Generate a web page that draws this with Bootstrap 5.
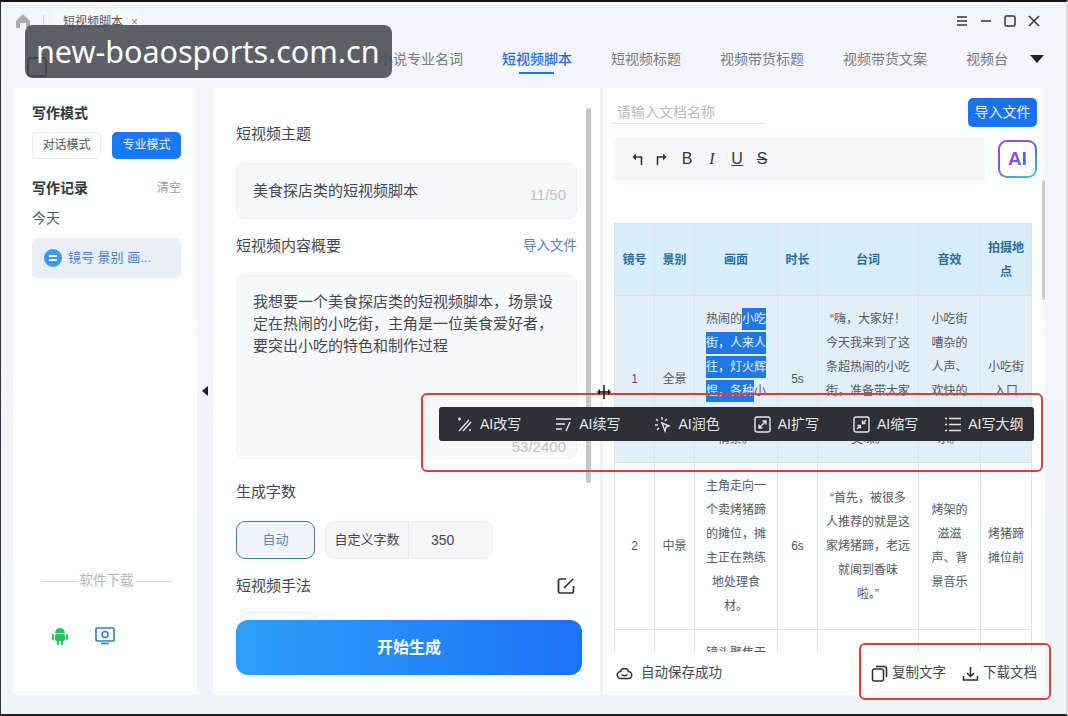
<!DOCTYPE html>
<html lang="zh-CN">
<head>
  <meta charset="UTF-8" />
  <title>短视频脚本</title>
  <link href="https://cdn.jsdelivr.net/npm/bootstrap@5.3.3/dist/css/bootstrap.min.css" rel="stylesheet">
  <style>
    html, body { margin: 0; height: 716px; overflow: hidden; background: #f0f4fb; }
    body { font-family: "Liberation Sans", "Noto Sans CJK SC", sans-serif; color: #3a3d44; }
    .app-win { position: relative; width: 1068px; height: 716px; overflow: hidden; background: linear-gradient(180deg, #f4f5fa 0, #eff5fb 100%); border-top: 2px solid #111; border-bottom: 2px solid #222; border-left: 1px solid #333; border-right: 2px solid #d8dbe0; }
    .gap-t16 { margin-top: 16px; }
    .gap-t18 { margin-top: 18px; }
    .gap-t22 { margin-top: 22px; }

    .title-bar { height: 38px; padding: 0 26px 0 14px; }
    .home-ico { width: 16px; height: 16px; fill: #a9adb5; }
    .sep-v { width: 1px; height: 13px; background: #c8ccd3; margin: 0 11px 0 12px; }
    .win-tab { width: 86px; height: 31px; margin-top: 7px; padding: 0 0 5px 8px; background: #f8f9fc; font-size: 12px; color: #555; white-space: nowrap; }
    .win-tab span { margin-left: 8px; color: #888; }
    .win-btns { gap: 12px; }
    .win-btns svg { width: 12px; height: 12px; stroke: #33363c; fill: none; stroke-width: 1.5; }

    .tab-row { height: 38px; padding-left: 26px; font-size: 14px; color: #777b83; }
    .tab-ico { width: 20px; height: 20px; margin-top: 15px; border: 2px solid #333; border-radius: 4px; margin-right: 332px; }
    .tab-it { position: relative; margin-right: 39px; white-space: nowrap; }
    .tab-it.on { color: #2a6fd6; font-weight: 500; }
    .tab-it.on::after { content: ""; position: absolute; left: 17px; right: 18px; bottom: -4px; height: 2px; background: #1f74e8; }
    .tab-more { width: 0; height: 0; border-left: 7px solid transparent; border-right: 7px solid transparent; border-top: 8px solid #222; margin-left: -17px; }

    .main-row { height: 607px; margin-top: 10px; padding-left: 12px; }
    .side-box { width: 184px; background: #fdfeff; padding: 14px 16px 50px 19px; }
    .side-h { font-size: 14px; font-weight: 700; line-height: 22px; color: #33363c; }
    .mode-btn { width: 69px; height: 27px; border-radius: 5px; font-size: 12px; line-height: 27px; text-align: center; }
    .mode-off { border: 1px solid #eceef2; color: #555; line-height: 25px; }
    .mode-on { background: #1a78f2; color: #e8f2ff; }
    .clear-lnk { font-size: 12px; color: #9a9da3; }
    .today-t { font-size: 14px; line-height: 22px; margin-top: 8px; color: #555; }
    .hist-it { height: 40px; margin-top: 9px; background: #e9eff9; border-radius: 6px; padding-left: 12px; font-size: 13px; color: #4d80c8; gap: 6px; white-space: nowrap; }
    .hist-dot { width: 18px; height: 18px; }
    .dl-line { font-size: 13.5px; color: #b0b3b8; margin: 0 10px 36px 10px; gap: 2px; height: 20px; }
    .dl-line i { flex: 1; height: 1px; background: #d8dade; }
    .dl-ico { gap: 26px; padding-left: 19px; height: 18px; }

    .arrow-col { width: 16px; padding-bottom: 2px; }
    .arrow-l { width: 0; height: 0; border-top: 5px solid transparent; border-bottom: 5px solid transparent; border-right: 6px solid #222; }

    .mid-box { position: relative; width: 387px; background: #fdfeff; padding: 0 18px 20px 23px; }
    .mid-scroll { flex: 1; overflow: hidden; padding-top: 35px; min-height: 0; }
    .f-lab { font-size: 15px; line-height: 22px; color: #44474d; }
    .f-lnk { font-size: 13.5px; color: #5f83b0; padding-right: 5px; }
    .f-input { width: 341px; height: 56px; margin-top: 18px; padding: 0 10px 0 16px; background: #f7f8fc; border: 1px solid #eff0f4; border-radius: 8px; font-size: 15px; color: #44474d; }
    .f-count { font-size: 15px; color: #c0c2c7; margin-top: 8px; }
    .f-area { width: 341px; height: 184px; margin-top: 18px; padding: 15px 10px 0 16px; background: #f8f9fc; border: 1px solid #eff0f4; border-radius: 8px; font-size: 15px; line-height: 22px; color: #44474d; }
    .cnt-btn { height: 38px; font-size: 13px; }
    .cnt-auto { width: 79px; border: 1px solid #3e7ea8; border-radius: 9px; background: #eff4fa; color: #5f88b8; }
    .cnt-group { width: 168px; margin-left: 10px; border: 1px solid #f0f1f4; border-radius: 9px; background: #f7f7fa; }
    .cnt-group b { width: 83px; font-weight: 400; border-right: 1px solid #e8e9ed; color: #44474d; }
    .cnt-group span { padding-left: 22px; font-size: 14px; color: #44474d; }
    .edit-ico { margin-right: 7px; }
    .peek-box { width: 76px; height: 20px; margin: 15px 0 0 4px; border: 1px solid #e9eaee; border-radius: 8px; }
    .go-btn { width: 346px; height: 55px; flex-shrink: 0; border: 0; border-radius: 12px; background: linear-gradient(90deg, #2f9ffa, #1a72f5); color: #fff; font-family: "Liberation Serif", "Noto Sans CJK SC", serif; font-size: 16px; font-weight: 700; }
    .bar-mid { position: absolute; left: 373px; top: 20px; width: 5px; height: 375px; background: #c4c6ca; border-radius: 3px; }

    .split-v { width: 3px; background: #eef1f6; }
    .right-box { position: relative; width: 442px; background: #fdfeff; }
    .r-top { padding: 10px 8px 0 9px; height: 50px; }
    .doc-name { width: 153px; height: 25px; margin-top: 1px; border-bottom: 1px solid #e7e8eb; font-size: 14px; color: #b8bbc1; padding-left: 5px; line-height: 26px; }
    .imp-btn { width: 69px; height: 29px; border-radius: 5px; background: #1a73ee; color: #f0f6ff; font-size: 14px; line-height: 29px; text-align: center; }
    .ed-row { height: 42px; padding: 0 8px 0 11px; }
    .ed-tools { width: 371px; height: 42px; background: #f6f6fb; padding-left: 17px; gap: 13px; font-size: 16px; color: #33363c; }
    .ed-tools svg { width: 12px; height: 14px; fill: none; stroke: #33363c; stroke-width: 1.6; }
    .ed-tools span { width: 12px; text-align: center; }
    .ed-i { font-family: "Liberation Serif", serif; font-style: italic; }
    .ai-btn { position: relative; width: 39px; height: 38px; padding: 2px; border-radius: 9px; background: linear-gradient(150deg, #b23fd0, #5a6ae8 50%, #2fe0b0); }
    .ai-btn div { height: 100%; border-radius: 7px; background: #fff; font-size: 19px; font-weight: 700; line-height: 34px; text-align: center; }
    .ai-btn span { background: linear-gradient(90deg, #a83fd8, #3f6fe8); -webkit-background-clip: text; background-clip: text; color: transparent; }

    .tb-wrap { flex: 1; min-height: 0; overflow: hidden; padding: 43px 0 0 11px; }
    .sb-tbl { width: 417px; table-layout: fixed; font-size: 12px; line-height: 24px; margin: 0; border-color: #d8e4ea; --bs-table-bg: transparent; color: #55585d; }
    .sb-tbl th, .sb-tbl td { padding: 11px 2px; text-align: center; vertical-align: middle; }
    .sb-tbl thead th { height: 72px; background: #d9eefc; color: #2c6c98; font-weight: 700; padding: 0 2px; }
    .sb-tbl .row-sel td { background: #e2eff9; }
    .sel-t { padding: 4px 0; background: #1f78e4; color: #eaf4ff; }
    .w1, .w2, .w4 { width: 40px; }
    .w3 { width: 83px; }
    .w5 { width: 101px; }
    .w6 { width: 62px; }
    .w7 { width: 51px; }

    .r-foot { height: 43px; flex-shrink: 0; background: #fdfeff; padding: 0 8px 0 13px; font-size: 13.5px; color: #44474d; }
    .r-foot svg { width: 17px; height: 17px; fill: none; stroke: #2c2f34; stroke-width: 1.5; }
    .bar-right { position: absolute; left: 439px; top: 92px; width: 3px; height: 120px; background: #c9cbcf; border-radius: 2px; }

    .ai-bar { position: absolute; left: 438px; top: 405px; width: 595px; height: 34px; padding-left: 17px; gap: 34px; background: #2e3038; border-radius: 3px; color: #e6e7ea; font-size: 14px; white-space: nowrap; }
    .ai-bar div { gap: 7px; }
    .ai-bar svg { width: 17px; height: 17px; fill: none; stroke: #e6e7ea; stroke-width: 1.4; }
    .ai-bar .ai-last { margin-left: -8px; }
    .red-a, .red-b { position: absolute; border: 2px solid #d8403a; border-radius: 6px; pointer-events: none; }
    .red-a { left: 420px; top: 391px; width: 622px; height: 79px; }
    .red-b { left: 858px; top: 641px; width: 192px; height: 57px; }
    .curs-mark { position: absolute; left: 596px; top: 383px; width: 14px; height: 14px; }
    .wm-tag { position: absolute; left: 24px; top: 23px; width: 367px; height: 53px; background: rgba(72, 74, 82, .88); border-radius: 8px; color: #fff; font-family: "Noto Sans", sans-serif; font-size: 30.500px; line-height: 53px; padding-left: 11px; white-space: nowrap; }
  </style>
</head>
<body>
  <div class="app-win">

    <div class="title-bar d-flex align-items-center">
      <svg class="home-ico" viewBox="0 0 16 16"><path d="M8 1 1 8v7h4v-5h6v5h4V8z"/></svg>
      <div class="sep-v"></div>
      <div class="win-tab d-flex align-items-center align-self-start">短视频脚本<span>×</span></div>
      <div class="win-btns d-flex align-items-center ms-auto">
        <svg viewBox="0 0 12 12"><path d="M1 2h10M1 6h10M1 10h10"/></svg>
        <svg viewBox="0 0 12 12"><path d="M1 6h10"/></svg>
        <svg viewBox="0 0 12 12"><rect x="1" y="1" width="10" height="10" rx="1.5"/></svg>
        <svg viewBox="0 0 12 12"><path d="m1 1 10 10M11 1 1 11"/></svg>
      </div>
    </div>

    <div class="tab-row d-flex align-items-center">
      <div class="tab-ico"></div>
      <div class="tab-it">小说专业名词</div>
      <div class="tab-it on">短视频脚本</div>
      <div class="tab-it">短视频标题</div>
      <div class="tab-it">视频带货标题</div>
      <div class="tab-it">视频带货文案</div>
      <div class="tab-it">视频台</div>
      <div class="tab-more"></div>
    </div>

    <div class="main-row d-flex">
      <aside class="side-box d-flex flex-column">
        <div class="side-h mb-2">写作模式</div>
        <div class="d-flex justify-content-between">
          <div class="mode-btn mode-off">对话模式</div>
          <div class="mode-btn mode-on">专业模式</div>
        </div>
        <div class="d-flex justify-content-between align-items-center gap-t18">
          <div class="side-h">写作记录</div>
          <div class="clear-lnk">清空</div>
        </div>
        <div class="today-t">今天</div>
        <div class="hist-it d-flex align-items-center">
          <svg class="hist-dot" viewBox="0 0 18 18"><circle cx="9" cy="9" r="9" fill="#3d97f0"/><path d="M5 7h8M5 11h8" stroke="#fff" stroke-width="1.8"/></svg>
          镜号 景别 画...
        </div>
        <div class="dl-line d-flex align-items-center mt-auto"><i></i>软件下载<i></i></div>
        <div class="dl-ico d-flex align-items-center">
          <svg width="18" height="18" viewBox="0 0 18 18" fill="#2fc05a"><path d="M4 6a5 5 0 0 1 10 0z"/><rect x="4" y="7" width="10" height="7" rx="1"/><rect x="1" y="7" width="2" height="6" rx="1"/><rect x="15" y="7" width="2" height="6" rx="1"/><rect x="6" y="13" width="2" height="5" rx="1"/><rect x="10" y="13" width="2" height="5" rx="1"/></svg>
          <svg width="20" height="18" viewBox="0 0 20 18" fill="none"><rect x="1" y="1" width="18" height="13" rx="1" stroke="#2a7fc4" stroke-width="1.6"/><path d="M6 16.500h8" stroke="#2a7fc4" stroke-width="1.6"/><circle cx="10" cy="7.500" r="3" stroke="#2a7fc4" stroke-width="1.5"/></svg>
        </div>
      </aside>

      <div class="arrow-col d-flex align-items-center justify-content-center"><div class="arrow-l"></div></div>

      <section class="mid-box d-flex flex-column">
        <div class="mid-scroll">
          <div class="f-lab">短视频主题</div>
          <div class="f-input d-flex align-items-center justify-content-between">美食探店类的短视频脚本<span class="f-count">11/50</span></div>
          <div class="d-flex justify-content-between align-items-center gap-t16">
            <div class="f-lab">短视频内容概要</div>
            <div class="f-lnk">导入文件</div>
          </div>
          <div class="f-area d-flex flex-column">
            <div>我想要一个美食探店类的短视频脚本&#65292;场景设定在热闹的小吃街&#65292;主角是一位美食爱好者&#65292;要突出小吃的特色和制作过程</div>
            <div class="f-count mt-auto text-end">53/2400</div>
          </div>
          <div class="f-lab gap-t22">生成字数</div>
          <div class="d-flex gap-t18">
            <div class="cnt-btn cnt-auto d-flex align-items-center justify-content-center">自动</div>
            <div class="cnt-btn cnt-group d-flex align-items-center"><b class="h-100 d-flex align-items-center justify-content-center">自定义字数</b><span>350</span></div>
          </div>
          <div class="d-flex justify-content-between align-items-center gap-t16">
            <div class="f-lab">短视频手法</div>
            <svg class="edit-ico" width="18" height="18" viewBox="0 0 18 18" fill="none" stroke="#2c2f34" stroke-width="1.700"><path d="M9 2H3a1.500 1.500 0 0 0-1.500 1.500v11A1.500 1.500 0 0 0 3 16h12a1.500 1.500 0 0 0 1.500-1.500V9"/><path d="m7 11 9-9"/></svg>
          </div>
          <div class="peek-box"></div>
        </div>
        <button class="go-btn" type="button">开始生成</button>
        <div class="bar-mid"></div>
      </section>

      <div class="split-v"></div>

      <section class="right-box d-flex flex-column">
        <div class="r-top d-flex justify-content-between">
          <div class="doc-name">请输入文档名称</div>
          <div class="imp-btn">导入文件</div>
        </div>
        <div class="ed-row d-flex justify-content-between align-items-center">
          <div class="ed-tools d-flex align-items-center">
            <svg viewBox="0 0 12 14"><path d="M10.500 13V5H2"/><path d="M5 1.500 1.500 5 5 8.500" fill="#33363c" stroke="none"/></svg>
            <svg viewBox="0 0 12 14"><path d="M1.500 13V5H10"/><path d="M7 1.500 10.500 5 7 8.500" fill="#33363c" stroke="none"/></svg>
            <span>B</span>
            <span class="ed-i">I</span>
            <span class="text-decoration-underline">U</span>
            <span class="text-decoration-line-through">S</span>
          </div>
          <div class="ai-btn"><div><span>AI</span></div></div>
        </div>
        <div class="tb-wrap">
          <table class="table table-bordered sb-tbl">
            <thead>
              <tr>
                <th class="w1">镜号</th><th class="w2">景别</th><th class="w3">画面</th><th class="w4">时长</th><th class="w5">台词</th><th class="w6">音效</th><th class="w7">拍摄地点</th>
              </tr>
            </thead>
            <tbody>
              <tr class="row-sel">
                <td>1</td><td>全景</td>
                <td>热闹的<span class="sel-t">小吃<br>街&#65292;人来人<br>往&#65292;灯火辉<br>煌&#65292;各种</span>小<br>吃摊前人<br>情景。</td>
                <td>5s</td>
                <td>“嗨&#65292;大家好&#65281;<br>今天我来到了这<br>条超热闹的小吃<br>街&#65292;准备带大家<br>尝尝这里的<br>美味。”</td>
                <td>小吃街<br>嘈杂的<br>人声、<br>欢快的<br>背景音<br>乐。</td>
                <td>小吃街<br>入口</td>
              </tr>
              <tr>
                <td>2</td><td>中景</td>
                <td>主角走向一<br>个卖烤猪蹄<br>的摊位&#65292;摊<br>主正在熟练<br>地处理食<br>材。</td>
                <td>6s</td>
                <td>“首先&#65292;被很多<br>人推荐的就是这<br>家烤猪蹄&#65292;老远<br>就闻到香味<br>啦。”</td>
                <td>烤架的<br>滋滋<br>声、背<br>景音乐</td>
                <td>烤猪蹄<br>摊位前</td>
              </tr>
              <tr>
                <td></td><td></td><td>镜头聚焦于</td><td></td><td></td><td></td><td></td>
              </tr>
            </tbody>
          </table>
        </div>
        <div class="r-foot d-flex align-items-center">
          <svg viewBox="0 0 17 17"><path d="M5 13.500a3.500 3.500 0 0 1-.5-7 4.200 4.200 0 0 1 8 0 3.500 3.500 0 0 1-.5 7z"/><path d="M5.500 9.500c1.500 1.500 4.500 1.500 6 0"/></svg>
          <span class="ms-2">自动保存成功</span>
          <div class="ms-auto d-flex align-items-center">
            <svg viewBox="0 0 17 17"><rect x="1.500" y="4" width="11" height="12" rx="2"/><path d="M5 1.500h8.500a2 2 0 0 1 2 2V12"/></svg>
            <span class="ms-1">复制文字</span>
            <svg viewBox="0 0 17 17" class="ms-3"><path d="M8.500 2v9M5 8l3.500 3.500L12 8M1.500 11v4h14v-4"/></svg>
            <span class="ms-1">下载文档</span>
          </div>
        </div>
        <div class="bar-right"></div>
      </section>
    </div>

    <div class="ai-bar d-flex align-items-center">
      <div class="d-flex align-items-center"><svg viewBox="0 0 17 17"><path d="M3 15 13 4M7 15 15 6M2 3h3M3.500 1.500v3M13 14h2"/></svg>AI改写</div>
      <div class="d-flex align-items-center"><svg viewBox="0 0 17 17"><path d="M1 3h15M1 8h9M1 13h6M15 6l-4 9"/></svg>AI续写</div>
      <div class="d-flex align-items-center"><svg viewBox="0 0 17 17"><path d="M8 7l7 3-3 1-1 4zM8 1v3M2 3l2 2M1 9h3M3 14l2-2M13 3l-2 2"/></svg>AI润色</div>
      <div class="d-flex align-items-center"><svg viewBox="0 0 17 17"><rect x="1" y="1" width="15" height="15" rx="2"/><path d="m5 12 7-7M8.500 5H12v3.500M5 8.500V12h3.500"/></svg>AI扩写</div>
      <div class="d-flex align-items-center"><svg viewBox="0 0 17 17"><rect x="1" y="1" width="15" height="15" rx="2"/><path d="m4 13 3.500-3.500M13 4 9.500 7.500M4.500 9.500h3v3M12.500 7.500h-3v-3"/></svg>AI缩写</div>
      <div class="d-flex align-items-center ai-last"><svg viewBox="0 0 17 17"><path d="M5 2.500h12M5 8.500h12M5 14.500h12M1 2.500h2M1 8.500h2M1 14.500h2"/></svg>AI写大纲</div>
    </div>
    <div class="red-a"></div>
    <div class="red-b"></div>
    <svg class="curs-mark" viewBox="0 0 14 14" fill="none" stroke="#111" stroke-width="1.500"><path d="M7 0v14M2 7h10"/><path d="M3 4 0 7l3 3zM11 4l3 3-3 3z" fill="#111" stroke="none"/></svg>

    <div class="wm-tag">new-boaosports.com.cn</div>
  </div>

  <script src="https://cdn.jsdelivr.net/npm/bootstrap@5.3.3/dist/js/bootstrap.bundle.min.js"></script>
</body>
</html>
